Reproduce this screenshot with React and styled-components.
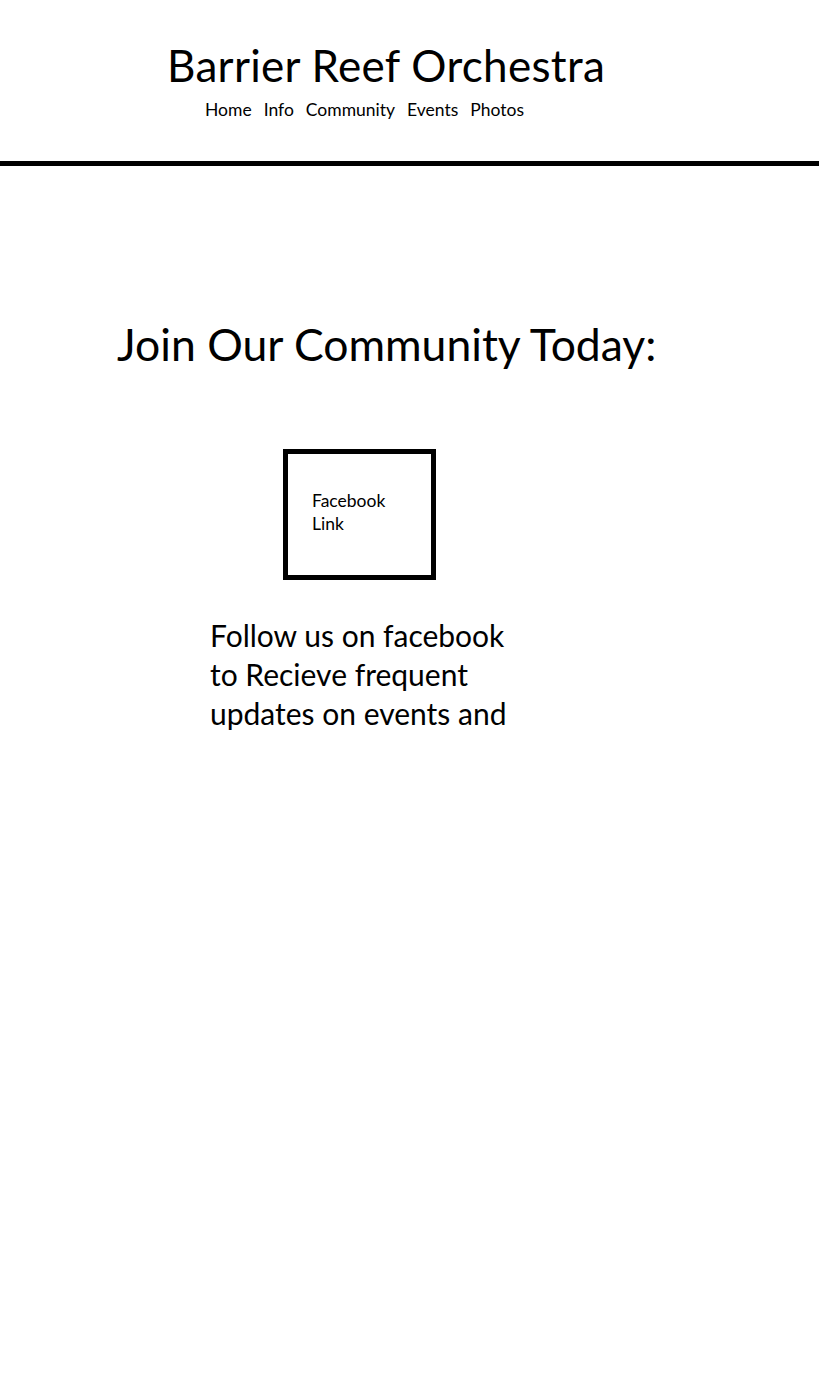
import styled, { createGlobalStyle } from "styled-components";

const GlobalStyle = createGlobalStyle`
  body {
    margin: 0;
    background: #fff;
    color: #000;
    font-family: Lato, "Open Sans", sans-serif;
  }
`;

const navItems = ["Home", "Info", "Community", "Events", "Photos"];

export default function App() {
  return (
    <>
      <GlobalStyle />
      <Header>
        <Title>Barrier Reef Orchestra</Title>
        <Nav>
          {navItems.map((item) => (
            <NavLink key={item} href="#">
              {item}
            </NavLink>
          ))}
        </Nav>
      </Header>
      <Main>
        <Heading>Join Our Community Today:</Heading>
        <LinkBox href="#">
          Facebook
          <br />
          Link
        </LinkBox>
        <Blurb>
          Follow us on facebook to Recieve frequent updates on events and
        </Blurb>
      </Main>
    </>
  );
}

const Header = styled.header`
  padding: 39px 0 0;
  border-bottom: 5px solid #000;
`;

const Title = styled.h1`
  margin: 0 0 0 167px;
  font-size: 44px;
  font-weight: 400;
  letter-spacing: 0.3px;
  line-height: 1.2;
`;

const Nav = styled.nav`
  display: flex;
  gap: 12px;
  margin: 7px 0 0 205px;
  padding-bottom: 41px;
`;

const NavLink = styled.a`
  font-size: 17.5px;
  line-height: 1.2;
  color: #000;
  text-decoration: none;
`;

const Main = styled.main`
  padding-top: 151px;
`;

const Heading = styled.h2`
  margin: 0 0 0 117px;
  font-size: 44.5px;
  font-weight: 400;
  line-height: 1.2;
`;

const LinkBox = styled.a`
  display: block;
  box-sizing: border-box;
  width: 153px;
  height: 131px;
  margin: 79px 0 0 283px;
  padding: 35px 0 0 24px;
  border: 5px solid #000;
  font-size: 17.5px;
  line-height: 23px;
  color: #000;
  text-decoration: none;
`;

const Blurb = styled.p`
  width: 310px;
  margin: 36px 0 0 210px;
  font-size: 30px;
  line-height: 39px;
`;
